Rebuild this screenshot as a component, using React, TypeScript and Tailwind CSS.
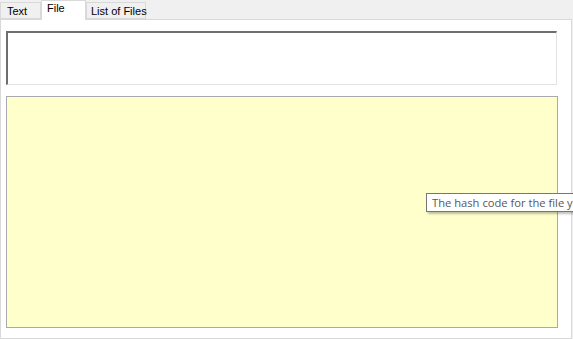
import React from "react";

function Tab({ label, active, className }: { label: string; active?: boolean; className?: string }) {
    if (active) {
        return (
            <div className={`relative z-10 -mb-px flex h-[20px] items-start border border-b-0 border-[#d9d9d9] bg-white px-[5px] pt-[1px] ${className ?? ""}`}>
                <span className="whitespace-nowrap text-[11px] leading-[13px] text-black">{label}</span>
            </div>
        );
    }
    return (
        <div className={`flex h-[17px] items-start border border-[#d9d9d9] bg-[#f0f0f0] px-[4px] pt-[2px] ${className ?? ""}`}>
            <span className="whitespace-nowrap text-[11px] leading-[13px] text-black">{label}</span>
        </div>
    );
}

export default function App() {
    return (
        <div className="relative h-[339px] w-[573px] overflow-hidden bg-[#f0f0f0] font-['Liberation_Sans',Arial,sans-serif]">
            {/* Tabs */}
            <div className="flex h-[19px] items-end">
                <Tab label="Text" className="w-[41px] pl-[6px]" />
                <Tab label="File" active className="w-[45px]" />
                <Tab label="List of Files" className="w-[60px]" />
            </div>

            {/* Tab page */}
            <div className="h-[320px] w-[572px] border border-[#d9d9d9] bg-white px-[5px] pt-[11px]">
                <div className="h-[54px] w-[551px] border-l-2 border-t-2 border-r border-b border-l-[#6e6e6e] border-t-[#6e6e6e] border-r-[#e3e3e3] border-b-[#e3e3e3] bg-white" />
                <div className="mt-[11px] h-[232px] w-[552px] border border-[#a9a9b0] bg-[#ffffcc]" />
            </div>

            {/* Tooltip */}
            <div className="absolute left-[426px] top-[193px] flex h-[19px] items-center whitespace-nowrap border border-[#767676] bg-white pl-[5px] pr-[6px] shadow-[2px_2px_2px_rgba(0,0,0,0.25)]">
                <span className="font-['Open_Sans',sans-serif] text-[11.2px] leading-[14px] text-[#575757]">
                    The hash code for the file you selected
                </span>
            </div>
        </div>
    );
}
